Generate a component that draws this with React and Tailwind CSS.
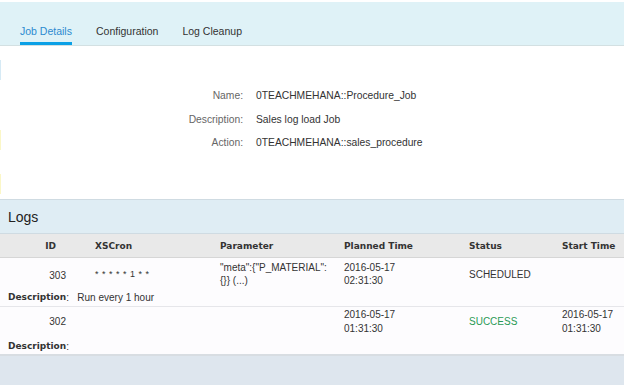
export default function App() {
  const sans = { fontFamily: '"Liberation Sans", Arial, sans-serif' };
  const bold = { fontFamily: '"DejaVu Sans", Verdana, sans-serif' };
  return (
    <div className="w-[624px] h-[385px] bg-white overflow-hidden relative text-[10px] text-[#333]" style={sans}>
      <div className="h-[2px] bg-white" />
      <div className="h-[44px] bg-[#dff2f7] border-b border-[#d3e0e2] flex items-end pl-[20px] gap-[24px] text-[10.5px]">
        <div className="flex flex-col items-center">
          <span className="text-[#2c8ad0] leading-[13px] pb-[4px]">Job Details</span>
          <div className="h-[3px] w-full bg-[#0aa0e6]" />
        </div>
        <span className="text-[#333] leading-[13px] pb-[7px]">Configuration</span>
        <span className="text-[#333] leading-[13px] pb-[7px]">Log Cleanup</span>
      </div>
      <div className="h-[153px] relative">
        <div className="absolute left-0 top-[14px] w-[1px] h-[20px] bg-[#d6eaf5]" />
        <div className="absolute left-0 top-[84px] w-[1px] h-[20px] bg-[#fbf7c7]" />
        <div className="absolute left-0 top-[128px] w-[1px] h-[20px] bg-[#fbf7c7]" />
        <div className="pt-[43px] grid grid-cols-[243px_1fr] gap-y-[10.5px] gap-x-[13px] leading-[13px] text-[10.3px]">
          <span className="text-right text-[#666]">Name:</span>
          <span>0TEACHMEHANA::Procedure_Job</span>
          <span className="text-right text-[#666]">Description:</span>
          <span>Sales log load Job</span>
          <span className="text-right text-[#666]">Action:</span>
          <span>0TEACHMEHANA::sales_procedure</span>
        </div>
      </div>
      <div className="h-[35px] bg-[#dfedf4] border-t border-b border-[#cfdbe2] flex items-center pl-[8px]">
        <span className="text-[14px] text-[#222] pt-[2px]" style={sans}>Logs</span>
      </div>
      <div className="h-[24px] bg-[#e9e9e9] border-b border-[#d6d6d6] grid grid-cols-[95px_125px_124px_125px_93px_1fr] items-center text-[9px] font-bold text-[#333] pt-[2px]" style={bold}>
        <span className="text-right pr-[39px]">ID</span>
        <span>XSCron</span>
        <span>Parameter</span>
        <span>Planned Time</span>
        <span>Status</span>
        <span>Start Time</span>
      </div>
      <div className="bg-[#fdfcfe] border-b border-[#e6e6ea] h-[49px] pt-[3px]">
        <div className="grid grid-cols-[95px_125px_124px_125px_93px_1fr] leading-[13px]">
          <span className="text-right pr-[29px] pt-[8px]">303</span>
          <span className="pt-[7px] text-[9px] tracking-[0.5px]">* * * * * 1 * *</span>
          <span>"meta":{"{"}"P_MATERIAL":<br />{"{}"}{"}"} (...)</span>
          <span>2016-05-17<br />02:31:30</span>
          <span className="pt-[7px]">SCHEDULED</span>
          <span />
        </div>
        <div className="flex items-center mt-[4px] pl-[8px] leading-[13px]">
          <span className="font-bold text-[9px] text-[#333]" style={bold}>Description</span>
          <span className="whitespace-pre">:   Run every 1 hour</span>
        </div>
      </div>
      <div className="bg-[#fdfcfe] border-b-2 border-[#d8dde2] h-[49px] pt-[1px]">
        <div className="grid grid-cols-[95px_125px_124px_125px_93px_1fr] leading-[14px]">
          <span className="text-right pr-[29px] pt-[7px]">302</span>
          <span />
          <span />
          <span>2016-05-17<br />01:31:30</span>
          <span className="pt-[7px] text-[#2a9a55]">SUCCESS</span>
          <span>2016-05-17<br />01:31:30</span>
        </div>
        <div className="flex items-center mt-[4px] pl-[8px] leading-[13px]">
          <span className="font-bold text-[9px] text-[#333]" style={bold}>Description</span>
          <span>:</span>
        </div>
      </div>
      <div className="h-[40px] bg-[#dee6ee]" />
    </div>
  );
}
